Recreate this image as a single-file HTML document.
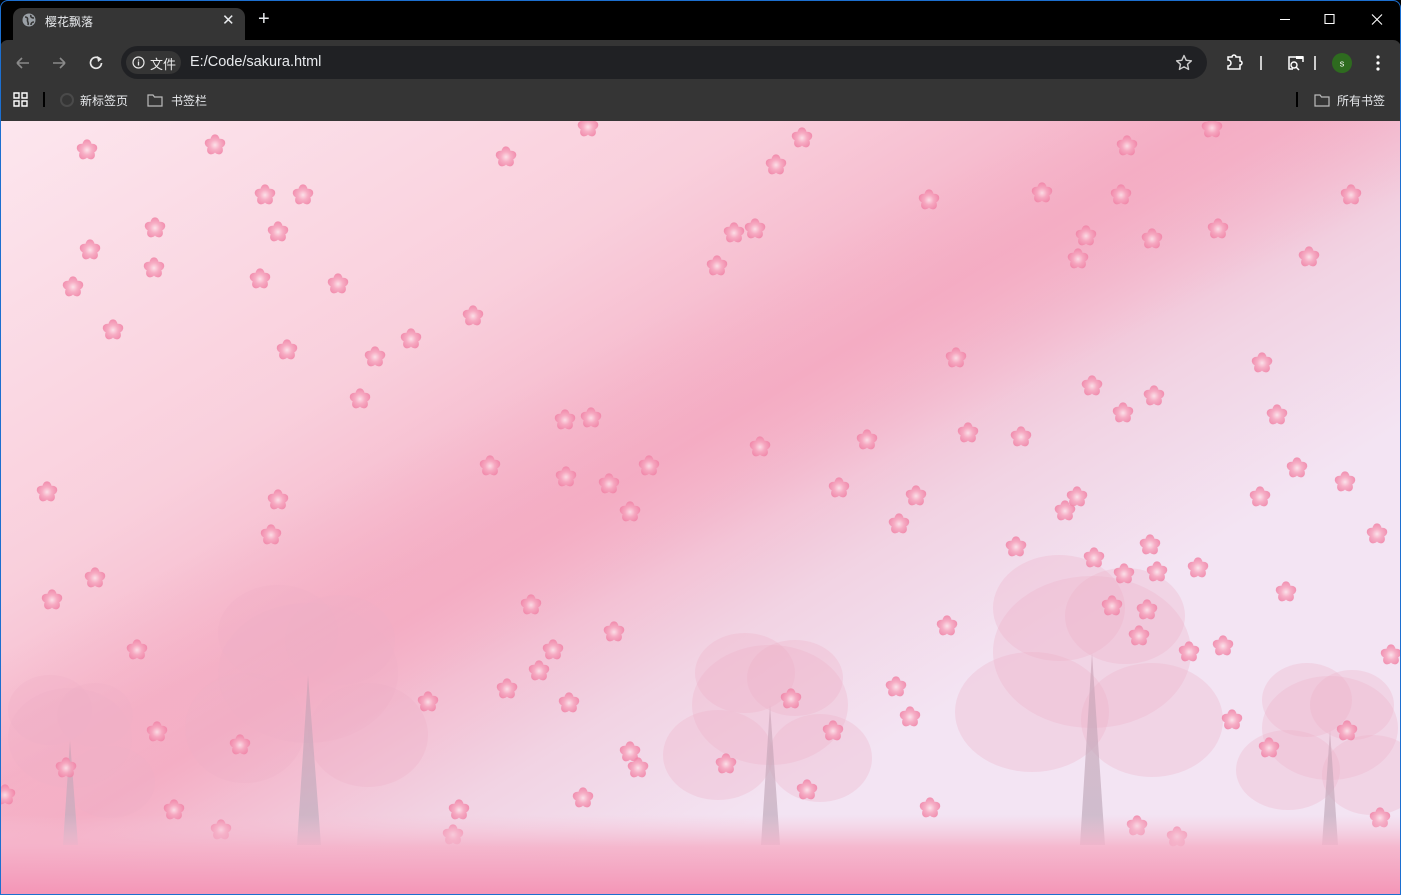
<!DOCTYPE html>
<html><head><meta charset="utf-8"><style>
*{margin:0;padding:0;box-sizing:border-box}
body{width:1401px;height:895px;overflow:hidden;background:#000;font-family:"Liberation Sans","Noto Sans CJK SC",sans-serif;position:relative}
.frame{position:absolute;inset:0;border:1px solid #1c6fd0;border-radius:8px 8px 0 0;pointer-events:none;z-index:10}
.tab{position:absolute;left:13px;top:8px;width:232px;height:32px;background:#353535;border-radius:9px 9px 0 0;color:#fff;font-size:12px}
.bar{position:absolute;left:0;top:40px;width:1401px;height:81px;background:#353535;border-radius:8px 8px 0 0}
.omni{position:absolute;left:121px;top:46px;width:1086px;height:33px;background:#202124;border-radius:17px}
.chip{position:absolute;left:126px;top:51px;width:55px;height:23px;background:#353535;border-radius:12px;color:#e8e8e8;font-size:13px}
.t{position:absolute;color:#e8eaed;white-space:nowrap}
.page{position:absolute;left:1px;top:121px;width:1399px;height:774px;overflow:hidden}
</style></head><body>
<div class="tab">
<svg style="position:absolute;left:9px;top:5px" width="14" height="14" viewBox="0 0 14 14"><circle cx="7" cy="7" r="6.5" fill="#9aa0a6"/><path d="M3 4c2 0 3 1 2.5 3S7 9 6 12M9 2c-1 2 1 3 3 3M9 12c0-2 1-3 3-3" stroke="#353535" stroke-width="1.6" fill="none"/></svg>
<span class="t" style="left:32px;top:5px;font-size:12px">樱花飘落</span>
<span class="t" style="left:209px;top:3px;font-size:15px">✕</span>
</div>
<span class="t" style="left:258px;top:8px;font-size:20px">+</span>
<svg style="position:absolute;left:1278px;top:13px" width="110" height="14"><path d="M2 6.5h10M47 1.5h9v9h-9zM94 1.5l10 10M104 1.5l-10 10" stroke="#fff" stroke-width="1.1" fill="none"/></svg>
<div class="bar"></div>
<svg style="position:absolute;left:14px;top:54px" width="100" height="18" viewBox="0 0 100 18"><path d="M3 9h12M3 9l5-5M3 9l5 5" stroke="#8a8a8a" stroke-width="1.6" fill="none"/><path d="M39 9h12M51 9l-5-5M51 9l-5 5" stroke="#8a8a8a" stroke-width="1.6" fill="none"/><path d="M86 5a5.5 5.5 0 1 0 1.5 4" stroke="#e8e8e8" stroke-width="1.7" fill="none"/><path d="M83 2l5 3-4 3z" fill="#e8e8e8"/></svg>
<div class="omni"></div>
<div class="chip"><svg style="position:absolute;left:6px;top:5px" width="13" height="13"><circle cx="6.5" cy="6.5" r="5.5" stroke="#e8e8e8" stroke-width="1.2" fill="none"/><path d="M6.5 5.5v4M6.5 3.5v1" stroke="#e8e8e8" stroke-width="1.3"/></svg><span style="position:absolute;left:24px;top:3px">文件</span></div>
<span class="t" style="left:190px;top:54px;font-size:14.5px">E:/Code/sakura.html</span>
<svg style="position:absolute;left:1175px;top:54px" width="18" height="18" viewBox="0 0 18 18"><path d="M9 1.5l2.2 4.8 5.2.5-3.9 3.5 1.1 5.1L9 12.8l-4.6 2.6 1.1-5.1L1.6 6.8l5.2-.5z" stroke="#ccc" stroke-width="1.4" fill="none" stroke-linejoin="round"/></svg>
<svg style="position:absolute;left:1225px;top:53px" width="160" height="20"><path d="M3 4h4a2 2 0 0 1 4 0h4v4a2 2 0 0 1 0 4v4H3v-3a2 2 0 0 0 0-6z" stroke="#fff" stroke-width="1.5" fill="none"/><path d="M36 3v14" stroke="#fff" stroke-width="1.5"/><path d="M68 16h-4V4h14v5" stroke="#fff" stroke-width="1.5" fill="none"/><rect x="71" y="3" width="7" height="3" fill="#fff"/><circle cx="69" cy="12" r="3" stroke="#fff" stroke-width="1.4" fill="none"/><path d="M71 14l3 3" stroke="#fff" stroke-width="1.5"/><path d="M90 3v14" stroke="#fff" stroke-width="1.5"/><circle cx="117" cy="10" r="10" fill="#2e6b1f"/><text x="117" y="13.5" fill="#fff" font-size="9" text-anchor="middle" font-family="Liberation Sans">s</text><circle cx="153" cy="4" r="1.6" fill="#fff"/><circle cx="153" cy="10" r="1.6" fill="#fff"/><circle cx="153" cy="16" r="1.6" fill="#fff"/></svg>
<svg style="position:absolute;left:13px;top:92px" width="200" height="16"><path d="M1 1h5v5H1zM9 1h5v5H9zM1 9h5v5H1zM9 9h5v5H9z" stroke="#fff" stroke-width="1.4" fill="none"/><path d="M31 0v15" stroke="#000" stroke-width="2"/><circle cx="54" cy="8" r="6" stroke="#4a4a4a" stroke-width="2" fill="none"/><path d="M135 3h5l1.5 2H149v9h-14z" stroke="#bbb" stroke-width="1.2" fill="none"/></svg>
<span class="t" style="left:80px;top:92px;font-size:12px">新标签页</span>
<span class="t" style="left:171px;top:92px;font-size:12px">书签栏</span>
<svg style="position:absolute;left:1290px;top:92px" width="46" height="16"><path d="M7 0v15" stroke="#000" stroke-width="2"/><path d="M25 3h5l1.5 2H39v9H25z" stroke="#bbb" stroke-width="1.2" fill="none"/></svg>
<span class="t" style="left:1337px;top:92px;font-size:12px">所有书签</span>
<div class="page">
<svg width="1399" height="774" viewBox="1 121 1399 774">
<defs>
<linearGradient id="bg" x1="0" y1="0" x2="1" y2="0.9" gradientUnits="objectBoundingBox">
<stop offset="0" stop-color="#fce6ee"/><stop offset="0.3" stop-color="#f9cfdc"/><stop offset="0.48" stop-color="#f4b0c6"/><stop offset="0.62" stop-color="#f2d3e3"/><stop offset="0.75" stop-color="#f3e4f3"/><stop offset="1" stop-color="#f3e4f3"/>
</linearGradient>
<linearGradient id="band" x1="0" y1="0" x2="0" y2="1"><stop offset="0" stop-color="#f4a8c0" stop-opacity="0"/><stop offset="0.5" stop-color="#f4a8c0" stop-opacity="0.5"/><stop offset="1" stop-color="#f4a8c0" stop-opacity="0"/></linearGradient>
<linearGradient id="gr" x1="0" y1="0" x2="0" y2="1"><stop offset="0" stop-color="#f6c2d6" stop-opacity="0"/><stop offset="0.4" stop-color="#f5b3ca" stop-opacity="0.9"/><stop offset="1" stop-color="#f495b6"/></linearGradient>
<linearGradient id="tr" x1="0" y1="0" x2="0" y2="1"><stop offset="0" stop-color="#c9a0b4" stop-opacity="0.6"/><stop offset="1" stop-color="#c4b4c4" stop-opacity="0.8"/></linearGradient>
<radialGradient id="pf" gradientUnits="userSpaceOnUse" cx="0" cy="0" r="11"><stop offset="0" stop-color="#fde3ea"/><stop offset="0.45" stop-color="#f7a6bf"/><stop offset="1" stop-color="#f07ea3"/></radialGradient>
<g id="f" opacity="0.85"><g fill="url(#pf)">
<ellipse cx="0" cy="-5" rx="4.6" ry="5.6"/>
<ellipse cx="0" cy="-5" rx="4.6" ry="5.6" transform="rotate(72)"/>
<ellipse cx="0" cy="-5" rx="4.6" ry="5.6" transform="rotate(144)"/>
<ellipse cx="0" cy="-5" rx="4.6" ry="5.6" transform="rotate(216)"/>
<ellipse cx="0" cy="-5" rx="4.6" ry="5.6" transform="rotate(288)"/>
<circle r="5"/></g></g>
</defs>
<rect x="1" y="121" width="1399" height="774" fill="url(#bg)"/>
<g transform="translate(700,420) rotate(-27)"><rect x="-900" y="-110" width="1800" height="230" fill="url(#band)"/></g>
<g fill="#eeb0c8" fill-opacity="0.3">
<ellipse cx="278" cy="633" rx="60" ry="48"/><ellipse cx="340" cy="640" rx="55" ry="45"/><ellipse cx="308" cy="673" rx="90" ry="70"/><ellipse cx="245" cy="728" rx="60" ry="55"/><ellipse cx="368" cy="735" rx="60" ry="52"/>
<ellipse cx="50" cy="710" rx="42" ry="35"/><ellipse cx="95" cy="715" rx="38" ry="32"/><ellipse cx="70" cy="738" rx="62" ry="50"/><ellipse cx="110" cy="782" rx="45" ry="36"/>
<ellipse cx="745" cy="673" rx="50" ry="40"/><ellipse cx="795" cy="678" rx="48" ry="38"/><ellipse cx="770" cy="705" rx="78" ry="60"/><ellipse cx="718" cy="755" rx="55" ry="45"/><ellipse cx="820" cy="758" rx="52" ry="44"/>
<ellipse cx="1059" cy="608" rx="66" ry="53"/><ellipse cx="1125" cy="616" rx="60" ry="48"/><ellipse cx="1092" cy="652" rx="99" ry="76"/><ellipse cx="1032" cy="712" rx="77" ry="60"/><ellipse cx="1152" cy="720" rx="71" ry="57"/>
<ellipse cx="1307" cy="700" rx="45" ry="37"/><ellipse cx="1352" cy="705" rx="42" ry="35"/><ellipse cx="1330" cy="728" rx="68" ry="52"/><ellipse cx="1288" cy="770" rx="52" ry="40"/><ellipse cx="1372" cy="775" rx="50" ry="40"/>
</g>
<g fill="url(#tr)">
<path d="M308 675L297 845h24z"/><path d="M70 740L63 845h15z"/><path d="M770 705L761 845h19z"/><path d="M1092 653L1080 845h25z"/><path d="M1330 730L1322 845h16z"/>
</g>
<g>
<use href="#f" x="87" y="150"/><use href="#f" x="215" y="145"/><use href="#f" x="265" y="195"/><use href="#f" x="303" y="195"/><use href="#f" x="155" y="228"/><use href="#f" x="278" y="232"/><use href="#f" x="90" y="250"/><use href="#f" x="154" y="268"/><use href="#f" x="73" y="287"/><use href="#f" x="260" y="279"/><use href="#f" x="338" y="284"/><use href="#f" x="113" y="330"/><use href="#f" x="287" y="350"/><use href="#f" x="375" y="357"/><use href="#f" x="411" y="339"/><use href="#f" x="473" y="316"/><use href="#f" x="360" y="399"/><use href="#f" x="588" y="127"/><use href="#f" x="506" y="157"/><use href="#f" x="776" y="165"/><use href="#f" x="802" y="138"/><use href="#f" x="734" y="233"/><use href="#f" x="755" y="229"/><use href="#f" x="717" y="266"/><use href="#f" x="929" y="200"/><use href="#f" x="1042" y="193"/><use href="#f" x="1121" y="195"/><use href="#f" x="1086" y="236"/><use href="#f" x="1152" y="239"/><use href="#f" x="1218" y="229"/><use href="#f" x="1078" y="259"/><use href="#f" x="1351" y="195"/><use href="#f" x="1309" y="257"/><use href="#f" x="1212" y="128"/><use href="#f" x="1127" y="146"/><use href="#f" x="956" y="358"/><use href="#f" x="1092" y="386"/><use href="#f" x="1123" y="413"/><use href="#f" x="1154" y="396"/><use href="#f" x="1262" y="363"/><use href="#f" x="1277" y="415"/><use href="#f" x="968" y="433"/><use href="#f" x="1021" y="437"/><use href="#f" x="867" y="440"/><use href="#f" x="760" y="447"/><use href="#f" x="565" y="420"/><use href="#f" x="591" y="418"/><use href="#f" x="490" y="466"/><use href="#f" x="566" y="477"/><use href="#f" x="609" y="484"/><use href="#f" x="649" y="466"/><use href="#f" x="630" y="512"/><use href="#f" x="839" y="488"/><use href="#f" x="916" y="496"/><use href="#f" x="899" y="524"/><use href="#f" x="1077" y="497"/><use href="#f" x="1065" y="511"/><use href="#f" x="1260" y="497"/><use href="#f" x="1297" y="468"/><use href="#f" x="1345" y="482"/><use href="#f" x="1377" y="534"/><use href="#f" x="47" y="492"/><use href="#f" x="278" y="500"/><use href="#f" x="271" y="535"/><use href="#f" x="95" y="578"/><use href="#f" x="52" y="600"/><use href="#f" x="1016" y="547"/><use href="#f" x="1150" y="545"/><use href="#f" x="1094" y="558"/><use href="#f" x="1124" y="574"/><use href="#f" x="1157" y="572"/><use href="#f" x="1198" y="568"/><use href="#f" x="1286" y="592"/><use href="#f" x="1147" y="610"/><use href="#f" x="1112" y="606"/><use href="#f" x="1139" y="636"/><use href="#f" x="1189" y="652"/><use href="#f" x="1223" y="646"/><use href="#f" x="947" y="626"/><use href="#f" x="614" y="632"/><use href="#f" x="531" y="605"/><use href="#f" x="553" y="650"/><use href="#f" x="539" y="671"/><use href="#f" x="507" y="689"/><use href="#f" x="569" y="703"/><use href="#f" x="137" y="650"/><use href="#f" x="428" y="702"/><use href="#f" x="791" y="699"/><use href="#f" x="833" y="731"/><use href="#f" x="896" y="687"/><use href="#f" x="910" y="717"/><use href="#f" x="1232" y="720"/><use href="#f" x="1347" y="731"/><use href="#f" x="1269" y="748"/><use href="#f" x="1391" y="655"/><use href="#f" x="240" y="745"/><use href="#f" x="157" y="732"/><use href="#f" x="66" y="768"/><use href="#f" x="630" y="752"/><use href="#f" x="638" y="768"/><use href="#f" x="726" y="764"/><use href="#f" x="583" y="798"/><use href="#f" x="807" y="790"/><use href="#f" x="930" y="808"/><use href="#f" x="1137" y="826"/><use href="#f" x="1177" y="837"/><use href="#f" x="1380" y="818"/><use href="#f" x="174" y="810"/><use href="#f" x="459" y="810"/><use href="#f" x="221" y="830"/><use href="#f" x="453" y="835"/><use href="#f" x="5" y="795"/>
</g>
<rect x="1" y="815" width="1399" height="80" fill="url(#gr)"/>
</svg>
</div>
<div class="frame"></div>
</body></html>
